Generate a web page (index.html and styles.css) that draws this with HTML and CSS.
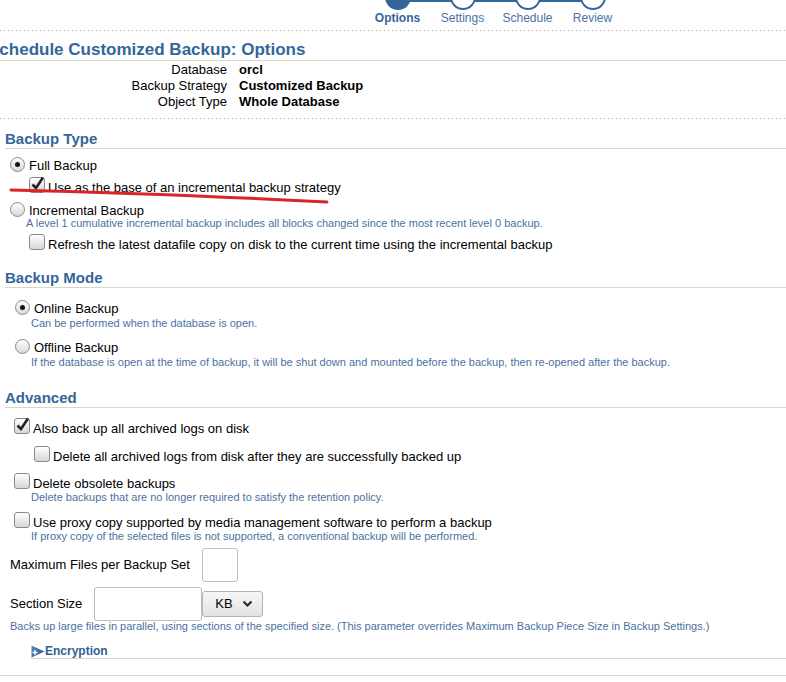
FILE: index.html
```html
<!DOCTYPE html>
<html>
<head>
<meta charset="utf-8">
<link rel="stylesheet" href="styles.css">
</head>
<body>
<div class="train">
  <div class="step"><span class="dot filled"></span><span class="slabel current">Options</span></div>
  <div class="step"><span class="dot"></span><span class="slabel">Settings</span></div>
  <div class="step"><span class="dot"></span><span class="slabel">Schedule</span></div>
  <div class="step"><span class="dot"></span><span class="slabel">Review</span></div>
</div>
<div class="dots first"></div>
<h1 class="title">Schedule Customized Backup: Options</h1>
<div class="info">
  <span class="k">Database</span><span class="v">orcl</span>
  <span class="k">Backup Strategy</span><span class="v">Customized Backup</span>
  <span class="k">Object Type</span><span class="v">Whole Database</span>
</div>
<div class="dots second"></div>

<h2 class="sec sec-type">Backup Type</h2>
<div class="opt r1"><span class="radio on"></span><span class="lbl rl">Full Backup</span></div>
<div class="opt c1"><span class="cb on"><svg viewBox="0 0 16 16" width="16" height="16"><path d="M3.5 8.5 L7 12 L14 1.5" fill="none" stroke="#222" stroke-width="2.6"/></svg></span><span class="lbl cl">Use as the base of an incremental backup strategy</span></div>
<div class="opt r2"><span class="radio"></span><span class="lbl rl">Incremental Backup</span></div>
<div class="desc d1">A level 1 cumulative incremental backup includes all blocks changed since the most recent level 0 backup.</div>
<div class="opt c2"><span class="cb"></span><span class="lbl cl">Refresh the latest datafile copy on disk to the current time using the incremental backup</span></div>

<h2 class="sec sec-mode">Backup Mode</h2>
<div class="opt r3"><span class="radio on"></span><span class="lbl rl">Online Backup</span></div>
<div class="desc d2">Can be performed when the database is open.</div>
<div class="opt r4"><span class="radio"></span><span class="lbl rl">Offline Backup</span></div>
<div class="desc d2">If the database is open at the time of backup, it will be shut down and mounted before the backup, then re-opened after the backup.</div>

<h2 class="sec sec-adv">Advanced</h2>
<div class="opt c3"><span class="cb on"><svg viewBox="0 0 16 16" width="16" height="16"><path d="M3.5 8.5 L7 12 L14 1.5" fill="none" stroke="#222" stroke-width="2.6"/></svg></span><span class="lbl cl">Also back up all archived logs on disk</span></div>
<div class="opt c4"><span class="cb"></span><span class="lbl cl">Delete all archived logs from disk after they are successfully backed up</span></div>
<div class="opt c5"><span class="cb"></span><span class="lbl cl">Delete obsolete backups</span></div>
<div class="desc d3">Delete backups that are no longer required to satisfy the retention policy.</div>
<div class="opt c6"><span class="cb"></span><span class="lbl cl">Use proxy copy supported by media management software to perform a backup</span></div>
<div class="desc d3">If proxy copy of the selected files is not supported, a conventional backup will be performed.</div>

<div class="field f1"><span class="flabel">Maximum Files per Backup Set</span><span class="input small"></span></div>
<div class="field f2"><span class="flabel">Section Size</span><span class="input wide"></span><span class="select">KB<svg width="11" height="8" viewBox="0 0 11 8"><path d="M1.5 1.5 L5.5 5.5 L9.5 1.5" fill="none" stroke="#222" stroke-width="2"/></svg></span></div>
<div class="desc d4">Backs up large files in parallel, using sections of the specified size. (This parameter overrides Maximum Backup Piece Size in Backup Settings.)</div>

<div class="enc"><svg class="encicon" width="14" height="13" viewBox="0 0 14 13"><defs><linearGradient id="g" x1="0" y1="0" x2="1" y2="1"><stop offset="0" stop-color="#5d8cc0"/><stop offset="1" stop-color="#1f4f86"/></linearGradient></defs><polygon points="0.5,0.5 13.5,6.5 0.5,12.5" fill="url(#g)"/><path d="M1.5 7.5 H6.5 M4 5 V10" stroke="#fff" stroke-width="1.4"/></svg><span>Encryption</span></div>
<div class="bottomline"></div>

<svg class="redline" width="330" height="22" viewBox="0 0 330 22"><path d="M2 5 C 90 7, 200 11, 318 17" fill="none" stroke="#d9252a" stroke-width="3" stroke-linecap="round"/></svg>
</body>
</html>
```

FILE: styles.css
```css
html, body {
  margin: 0;
  padding: 0;
  background: #fff;
}
body {
  font-family: "Liberation Sans", Arial, sans-serif;
  font-size: 13px;
  line-height: 16px;
  color: #000;
  position: relative;
  overflow: hidden;
  height: 682px;
}

/* train */
.train {
  display: flex;
  margin-left: 365px;
  height: 26px;
  position: relative;
  width: 260px;
}
.train::before {
  content: "";
  position: absolute;
  top: 0;
  height: 2px;
  left: 32px;
  right: 32px;
  background: #33669a;
}
.step {
  width: 65px;
  display: flex;
  flex-direction: column;
  align-items: center;
}
.dot {
  width: 26px;
  height: 26px;
  box-sizing: border-box;
  border-radius: 50%;
  border: 2px solid #33669a;
  background: #fff;
  margin-top: -16px;
  position: relative;
  z-index: 1;
}
.dot.filled {
  background: #33669a;
}
.slabel {
  font-size: 12px;
  line-height: 14px;
  margin-top: 1px;
  color: #4a72a0;
}
.slabel.current {
  font-weight: bold;
  color: #33669a;
}

.dots {
  height: 1px;
  background: repeating-linear-gradient(to right, #a0a0a0 0 1px, transparent 1px 4px);
}
.dots.first { margin-top: 4px; }
.dots.second { margin-top: 8px; }

.title {
  margin: 9px 0 0 -12px;
  font-size: 17px;
  line-height: 20px;
  font-weight: bold;
  color: #33669a;
  border-bottom: 1px solid #d6d8c4;
}

.info {
  display: grid;
  grid-template-columns: 227px auto;
  column-gap: 12px;
  margin-top: 1px;
}
.info .k { text-align: right; }
.info .v { font-weight: bold; }

.sec {
  margin: 0 0 0 5px;
  font-size: 15px;
  line-height: 18px;
  font-weight: bold;
  color: #33669a;
  border-bottom: 1px solid #d6d8c4;
}
.sec-type { margin-top: 11px; }
.sec-mode { margin-top: 16px; }
.sec-adv { margin-top: 21px; }

.opt {
  display: flex;
  align-items: flex-start;
}
.lbl { white-space: nowrap; }
.rl { margin-top: 1px; }
.cl { margin-top: 3px; }

.radio {
  width: 15px;
  height: 15px;
  box-sizing: border-box;
  border-radius: 50%;
  border: 1px solid #8a8a8a;
  background: linear-gradient(#ffffff, #d8d8d8);
  margin-right: 4px;
  flex: none;
  display: flex;
  align-items: center;
  justify-content: center;
}
.radio.on::after {
  content: "";
  width: 5px;
  height: 5px;
  border-radius: 50%;
  background: #111;
}
.cb {
  width: 16px;
  height: 16px;
  box-sizing: border-box;
  border-radius: 3px;
  border: 1px solid #8a8a8a;
  background: linear-gradient(#ffffff, #d6d6d6);
  margin-right: 3px;
  flex: none;
  position: relative;
}
.cb svg {
  position: absolute;
  left: -1px;
  top: -2px;
}

.r1 { margin: 8px 0 0 10px; }
.c1 { margin: 3px 0 0 29px; }
.r2 { margin: 6px 0 0 10px; }
.c2 { margin: 5px 0 0 29px; }
.r3 { margin: 12px 0 0 15px; }
.r4 { margin: 10px 0 0 15px; }
.c3 { margin: 10px 0 0 14px; }
.c4 { margin: 9px 0 0 34px; }
.c5 { margin: 8px 0 0 14px; }
.c6 { margin: 9px 0 0 14px; }

.desc {
  font-size: 11px;
  line-height: 12px;
  color: #4a72a0;
  white-space: nowrap;
}
.d1 { margin-left: 26px; margin-top: -2px; }
.d2 { margin-left: 31px; }
.d3 { margin-left: 31px; margin-top: -1px; }
.d4 { margin-left: 10px; margin-top: -1px; }

.field {
  display: flex;
  align-items: center;
  margin-left: 10px;
}
.f1 { margin-top: 6px; }
.f2 { margin-top: 5px; }
.flabel { margin-right: 12px; white-space: nowrap; }
.input {
  height: 34px;
  box-sizing: border-box;
  border: 1px solid #bcbcbc;
  border-radius: 3px;
  background: #fff;
}
.input.small { width: 36px; }
.input.wide { width: 108px; }
.select {
  height: 26px;
  width: 61px;
  box-sizing: border-box;
  border: 1px solid #b4b4b4;
  border-radius: 3px;
  background: linear-gradient(#f7f7f7, #e2e2e2);
  display: flex;
  align-items: center;
  padding-left: 12px;
  gap: 9px;
}

.enc {
  margin: 12px 0 0 31px;
  display: flex;
  align-items: center;
  font-size: 12px;
  line-height: 14px;
  font-weight: bold;
  color: #2f5f93;
  border-bottom: 1px solid #d6d8c4;
}
.encicon { flex: none; }

.bottomline {
  margin-top: 16px;
  border-top: 1px solid #d6d8c4;
}

.redline {
  position: absolute;
  left: 9px;
  top: 185px;
}
```
